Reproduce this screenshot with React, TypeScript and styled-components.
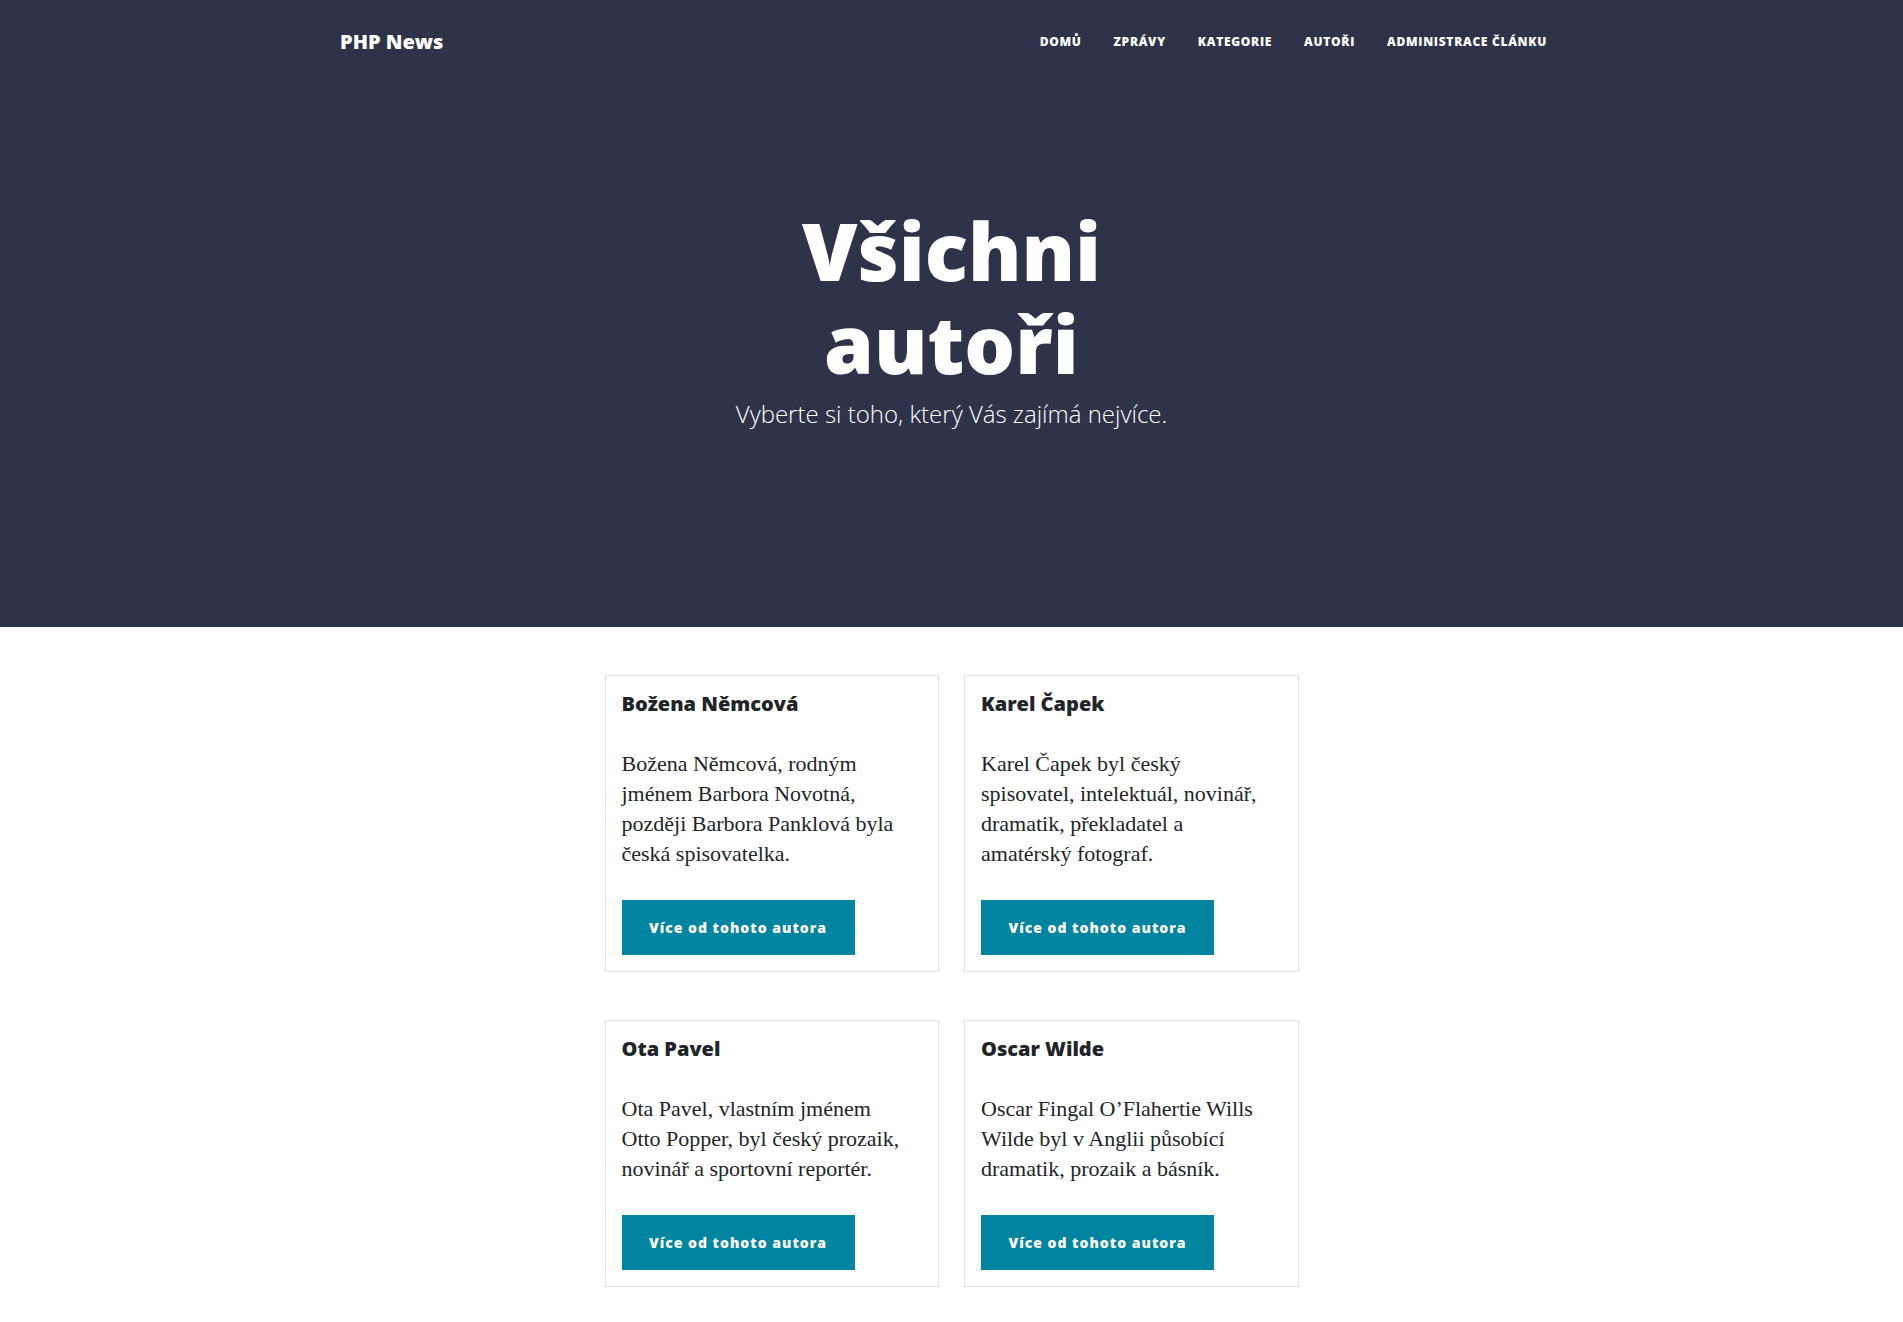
import React from "react";
import styled, { createGlobalStyle } from "styled-components";

const GlobalStyle = createGlobalStyle`
  html, body { margin: 0; padding: 0; background: #ffffff; }
  body {
    font-family: "Liberation Serif", "DejaVu Serif", serif;
    color: #212529;
    -webkit-font-smoothing: antialiased;
  }
  * { box-sizing: border-box; }
`;

const Masthead = styled.header`
  background: #2f3349;
  color: #ffffff;
`;

const NavBar = styled.nav`
  width: 1223px;
  margin: 0 auto;
  height: 84px;
  display: flex;
  align-items: center;
  justify-content: space-between;
`;

const Brand = styled.a`
  font-family: "Open Sans", sans-serif;
  font-weight: 800;
  font-size: 20px;
  line-height: 1.2;
  color: #ffffff;
  text-decoration: none;
`;

const NavList = styled.ul`
  list-style: none;
  margin: 0;
  padding: 0;
  display: flex;
  align-items: center;
`;

const NavLink = styled.a`
  display: block;
  padding: 0 16px;
  font-family: "Open Sans", sans-serif;
  font-weight: 800;
  font-size: 12px;
  line-height: 1.5;
  letter-spacing: 0.7px;
  text-transform: uppercase;
  color: #ffffff;
  text-decoration: none;
`;

const Heading = styled.div`
  max-width: 540px;
  margin: 0 auto;
  padding: 119px 0 200px;
  text-align: center;
`;

const Title = styled.h1`
  margin: 0;
  font-family: "Open Sans", sans-serif;
  font-weight: 800;
  font-size: 80px;
  line-height: 93px;
`;

const Subheading = styled.span`
  display: block;
  margin-top: 12px;
  font-family: "Open Sans", sans-serif;
  font-weight: 300;
  font-size: 24px;
  line-height: 1.1;
`;

const Main = styled.main`
  width: 694px;
  margin: 0 auto;
  padding: 48px 0 48px;
  display: grid;
  grid-template-columns: 1fr 1fr;
  column-gap: 25px;
  row-gap: 48px;
`;

const Card = styled.article`
  border: 1px solid #dee2e6;
  padding: 16px;
  display: flex;
  flex-direction: column;
  align-items: flex-start;
`;

const Name = styled.h5`
  margin: 0 0 33px;
  font-family: "Open Sans", sans-serif;
  font-weight: 800;
  font-size: 20px;
  line-height: 24px;
  color: #212529;
`;

const Bio = styled.p`
  max-width: 291px;
  margin: 0 0 31px;
  font-size: 22px;
  line-height: 30px;
  color: #212529;
`;

const Button = styled.a`
  display: inline-flex;
  align-items: center;
  justify-content: center;
  height: 55px;
  width: 233px;
  background: #0085a1;
  color: #ffffff;
  font-family: "Open Sans", sans-serif;
  font-weight: 800;
  font-size: 14px;
  letter-spacing: 1px;
  text-decoration: none;
`;

const links = ["Domů", "Zprávy", "Kategorie", "Autoři", "Administrace článku"];

const authors = [
  {
    name: "Božena Němcová",
    bio: "Božena Němcová, rodným jménem Barbora Novotná, později Barbora Panklová byla česká spisovatelka.",
  },
  {
    name: "Karel Čapek",
    bio: "Karel Čapek byl český spisovatel, intelektuál, novinář, dramatik, překladatel a amatérský fotograf.",
  },
  {
    name: "Ota Pavel",
    bio: "Ota Pavel, vlastním jménem Otto Popper, byl český prozaik, novinář a sportovní reportér.",
  },
  {
    name: "Oscar Wilde",
    bio: "Oscar Fingal O’Flahertie Wills Wilde byl v Anglii působící dramatik, prozaik a básník.",
  },
];

export default function App() {
  return (
    <>
      <GlobalStyle />
      <Masthead>
        <NavBar>
          <Brand href="#">PHP News</Brand>
          <NavList>
            {links.map((l) => (
              <li key={l}>
                <NavLink href="#">{l}</NavLink>
              </li>
            ))}
          </NavList>
        </NavBar>
        <Heading>
          <Title>Všichni autoři</Title>
          <Subheading>Vyberte si toho, který Vás zajímá nejvíce.</Subheading>
        </Heading>
      </Masthead>
      <Main>
        {authors.map((a) => (
          <Card key={a.name}>
            <Name>{a.name}</Name>
            <Bio>{a.bio}</Bio>
            <Button href="#">Více od tohoto autora</Button>
          </Card>
        ))}
      </Main>
    </>
  );
}
